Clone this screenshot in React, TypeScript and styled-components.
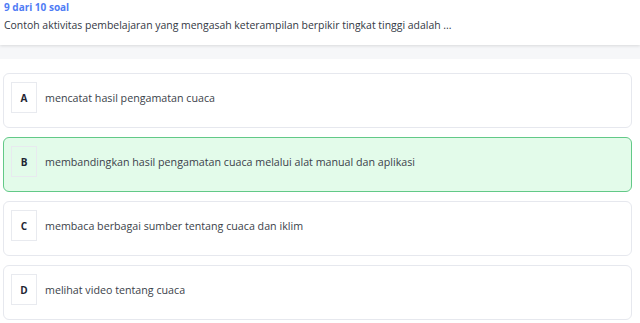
import React from "react"
import styled, { createGlobalStyle } from "styled-components"

const GlobalStyle = createGlobalStyle`
  html, body {
    margin: 0;
    padding: 0;
    background: #ffffff;
    font-family: "Open Sans", "Noto Sans", sans-serif;
  }
`

const Page = styled.div`
  width: 640px;
  height: 323px;
  overflow: hidden;
  background: #ffffff;
`

const Header = styled.div`
  height: 45px;
  box-sizing: border-box;
  padding: 0 4px;
  background: #ffffff;
  box-shadow: 0 1px 3px rgba(0, 0, 0, 0.12);
  position: relative;
  z-index: 1;
`

const Counter = styled.div`
  color: #4f7cf5;
  font-weight: 700;
  font-size: 10px;
  line-height: 15px;
`

const Question = styled.div`
  color: #333844;
  font-size: 10.45px;
  line-height: 16px;
  margin-top: 2px;
`

const Band = styled.div`
  height: 14px;
  background: #f6f7f9;
`

const OptionList = styled.div`
  display: flex;
  flex-direction: column;
  gap: 9px;
  padding: 14px 8px 0 3px;
`

const Option = styled.div<{ $selected?: boolean }>`
  height: 55px;
  box-sizing: border-box;
  display: flex;
  align-items: center;
  gap: 8px;
  padding: 0 7px 6px;
  border-radius: 6px;
  border: 1px solid ${p => (p.$selected ? "#62c987" : "#e6e8ee")};
  background: ${p => (p.$selected ? "#e3fbea" : "#ffffff")};
`

const Letter = styled.div`
  width: 26px;
  height: 31px;
  flex: none;
  box-sizing: border-box;
  border: 1px solid #e8eaef;
  display: flex;
  align-items: center;
  justify-content: center;
  font-size: 10px;
  font-weight: 700;
  color: #1f2533;
`

const Text = styled.div`
  font-size: 10.7px;
  color: #3b3f4a;
`

const options = [
  { key: "A", text: "mencatat hasil pengamatan cuaca" },
  { key: "B", text: "membandingkan hasil pengamatan cuaca melalui alat manual dan aplikasi", selected: true },
  { key: "C", text: "membaca berbagai sumber tentang cuaca dan iklim" },
  { key: "D", text: "melihat video tentang cuaca" },
]

export default function App() {
  return (
    <Page>
      <GlobalStyle />
      <Header>
        <Counter>9 dari 10 soal</Counter>
        <Question>
          Contoh aktivitas pembelajaran yang mengasah keterampilan berpikir tingkat tinggi adalah ...
        </Question>
      </Header>
      <Band />
      <OptionList>
        {options.map(o => (
          <Option key={o.key} $selected={o.selected}>
            <Letter>{o.key}</Letter>
            <Text>{o.text}</Text>
          </Option>
        ))}
      </OptionList>
    </Page>
  )
}
